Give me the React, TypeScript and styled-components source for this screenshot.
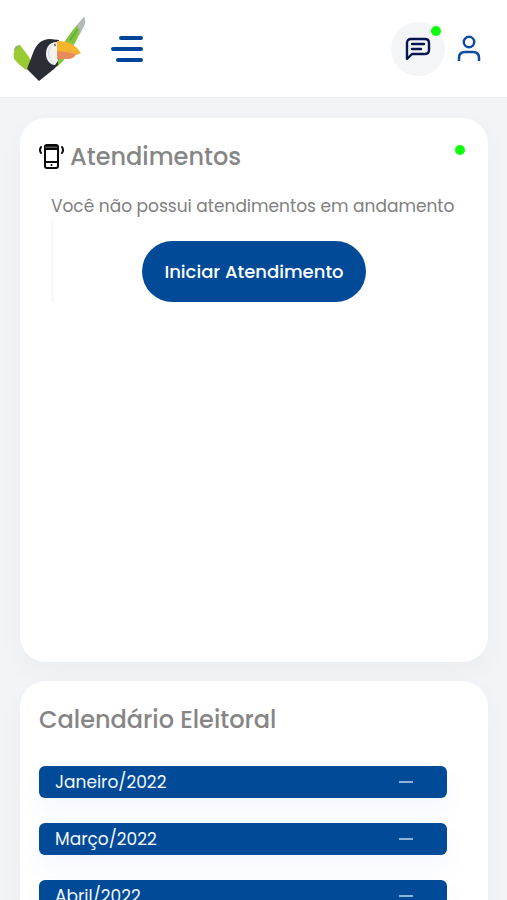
import React from "react";
import styled, { createGlobalStyle } from "styled-components";

const GlobalStyle = createGlobalStyle`
  * { box-sizing: border-box; }
  body {
    margin: 0;
    background: #f2f4f8;
    font-family: Poppins, Inter, "Open Sans", sans-serif;
    color: #808080;
  }
  button { font: inherit; border: 0; padding: 0; background: none; cursor: pointer; }
`;

const Header = styled.header`
  display: flex;
  align-items: center;
  height: 98px;
  padding: 0 25px 0 12px;
  background: #fff;
  border-bottom: 1px solid #ebedf1;
`;

const LogoLink = styled.a`
  display: flex;
  margin-right: 24px;
`;

const IconButton = styled.button`
  display: flex;
  align-items: center;
  justify-content: center;
`;

const Actions = styled.div`
  display: flex;
  align-items: center;
  gap: 11px;
  margin-left: auto;
`;

const ChatButton = styled(IconButton)`
  position: relative;
  width: 54px;
  height: 54px;
  border-radius: 50%;
  background: #f4f5f7;
`;

const StatusDot = styled.span`
  width: 10px;
  height: 10px;
  border-radius: 50%;
  background: #0cff0c;
`;

const ChatDot = styled(StatusDot)`
  position: absolute;
  top: 4px;
  right: 4px;
`;

const Main = styled.main`
  display: flex;
  flex-direction: column;
  gap: 19px;
  padding: 20px 19px 20px 20px;
`;

const Card = styled.section<{ $minHeight?: number }>`
  min-height: ${(p) => p.$minHeight ?? 0}px;
  padding: 20px 19px;
  border-radius: 26px;
  background: #fff;
  box-shadow: 0 10px 24px rgba(70, 90, 80, 0.04);
`;

const CardHeader = styled.div`
  display: flex;
  align-items: center;
  gap: 6px;
  height: 38px;
`;

const Title = styled.h2`
  margin: 0;
  font-size: 24px;
  line-height: 38px;
  font-weight: 500;
  color: #868686;
`;

const CardDot = styled(StatusDot)`
  margin: 0 4px 14px auto;
`;

const Service = styled.div`
  display: flex;
  flex-direction: column;
  margin: 17px 12px 0;
`;

const Message = styled.p`
  margin: 0;
  font-size: 17px;
  line-height: 26px;
  white-space: nowrap;
`;

const StartArea = styled.div`
  display: flex;
  justify-content: center;
  padding: 22px 3px 0 0;
  border-left: 3px solid #f8f9fa;
`;

const StartButton = styled.button`
  min-width: 224px;
  height: 61px;
  padding: 0 20px;
  border-radius: 31px;
  background: #004a98;
  color: #fff;
  font-size: 18px;
  font-weight: 500;
  white-space: nowrap;
`;

const Months = styled.ul`
  display: flex;
  flex-direction: column;
  gap: 25px;
  margin: 27px 22px 0 0;
  padding: 0;
  list-style: none;
`;

const MonthButton = styled.button`
  display: flex;
  align-items: center;
  justify-content: space-between;
  width: 100%;
  height: 32px;
  padding: 0 34px 0 16px;
  border-radius: 6px;
  background: #004a98;
  box-shadow: 0 12px 24px rgba(0, 100, 255, 0.05);
  color: #f3f7ff;
  font-size: 17px;
  line-height: 32px;
`;

const Dash = styled.span`
  width: 14px;
  height: 2px;
  background: #8fb3d8;
`;

function ToucanLogo() {
  return (
    <svg width="75" height="68" viewBox="0 0 75 68" aria-hidden="true">
      <path d="M2 37 Q3 31 8 30 L17 42 L20 49 L14 55 Q6 49 2 44 Q1 40 2 37Z" fill="#9acb32" />
      <path d="M2 36 Q2 30 8 30 L4 35Z" fill="#8bb873" />
      <path d="M45 52 L46 42 L53 26 L60 16 L72 2 Q74 6 70 14 L63 28 L51 46Z" fill="#83c43b" />
      <path d="M65 10 L72 2 Q75 6 71 13 L67 21 L68 14 L64 19 L66 12Z" fill="#b4baba" />
      <path d="M58 25 L66 14" stroke="#62ad43" strokeWidth="2" fill="none" />
      <path d="M15 54 L21 38 Q26 24 38 24 L47 25 L46 50 L42 54 L27 66Z" fill="#2a2d33" />
      <path d="M45 27 C36 27 34 34 34 39 C34 45 38 50 43 50 L46 46Z" fill="#f1f1f2" />
      <path d="M41 29 C34 34 36 44 42 49" stroke="#d5d7da" strokeWidth="1" fill="none" />
      <circle cx="43" cy="30" r="1.2" fill="#777b82" />
      <path d="M45 26 Q61 25 69 38 L45 37Z" fill="#f5b42b" />
      <path d="M45 36 L65 38 Q62 44 56 44 L45 44Z" fill="#e78a5c" />
      <path d="M54 34 L69 38 L65 40 L55 37Z" fill="#f2ae3c" />
    </svg>
  );
}

function MenuIcon() {
  return (
    <svg width="32" height="28" viewBox="0 0 32 28" fill="none" stroke="#00439a" strokeWidth="4" strokeLinecap="round" aria-hidden="true">
      <path d="M10 3H30M2 14H30M7 25H30" />
    </svg>
  );
}

function ChatIcon() {
  return (
    <svg width="26" height="24" viewBox="0 0 26 24" fill="none" stroke="#08164f" strokeWidth="2.4" strokeLinecap="round" strokeLinejoin="round" aria-hidden="true">
      <path d="M2 22V6Q2 2 6 2H20Q24 2 24 6V13Q24 17 20 17H7L2 22Z" />
      <path d="M7 7H19M7 12H16" />
    </svg>
  );
}

function UserIcon() {
  return (
    <svg width="26" height="28" viewBox="0 0 26 28" fill="none" stroke="#0b4c9f" strokeWidth="2.5" strokeLinecap="butt" strokeLinejoin="round" aria-hidden="true">
      <circle cx="13" cy="7" r="5.2" />
      <path d="M3 26V23Q3 17 9 17H17Q23 17 23 23V26" />
    </svg>
  );
}

function PhoneIcon() {
  return (
    <svg width="25" height="26" viewBox="0 0 25 26" fill="none" stroke="#090909" strokeWidth="2" strokeLinecap="round" aria-hidden="true">
      <rect x="6" y="1" width="13" height="23" rx="2" />
      <path d="M6 2H19V5H6Z" fill="#555" strokeWidth="1" />
      <path d="M6 5H19M6 18H19M2 3Q0 6 2 9M23 3Q25 6 23 9" />
      <circle cx="12.5" cy="21" r="1" fill="#090909" stroke="none" />
    </svg>
  );
}

const months = ["Janeiro/2022", "Março/2022", "Abril/2022"];

export default function App() {
  return (
    <>
      <GlobalStyle />
      <Header>
        <LogoLink href="#" aria-label="Início">
          <ToucanLogo />
        </LogoLink>
        <IconButton type="button" aria-label="Menu">
          <MenuIcon />
        </IconButton>
        <Actions>
          <ChatButton type="button" aria-label="Mensagens">
            <ChatIcon />
            <ChatDot />
          </ChatButton>
          <IconButton type="button" aria-label="Perfil">
            <UserIcon />
          </IconButton>
        </Actions>
      </Header>
      <Main>
        <Card $minHeight={544}>
          <CardHeader>
            <PhoneIcon />
            <Title>Atendimentos</Title>
            <CardDot />
          </CardHeader>
          <Service>
            <Message>Você não possui atendimentos em andamento</Message>
            <StartArea>
              <StartButton type="button">Iniciar Atendimento</StartButton>
            </StartArea>
          </Service>
        </Card>
        <Card>
          <CardHeader>
            <Title>Calendário Eleitoral</Title>
          </CardHeader>
          <Months>
            {months.map((month) => (
              <li key={month}>
                <MonthButton type="button" aria-expanded={false}>
                  {month}
                  <Dash />
                </MonthButton>
              </li>
            ))}
          </Months>
        </Card>
      </Main>
    </>
  );
}
